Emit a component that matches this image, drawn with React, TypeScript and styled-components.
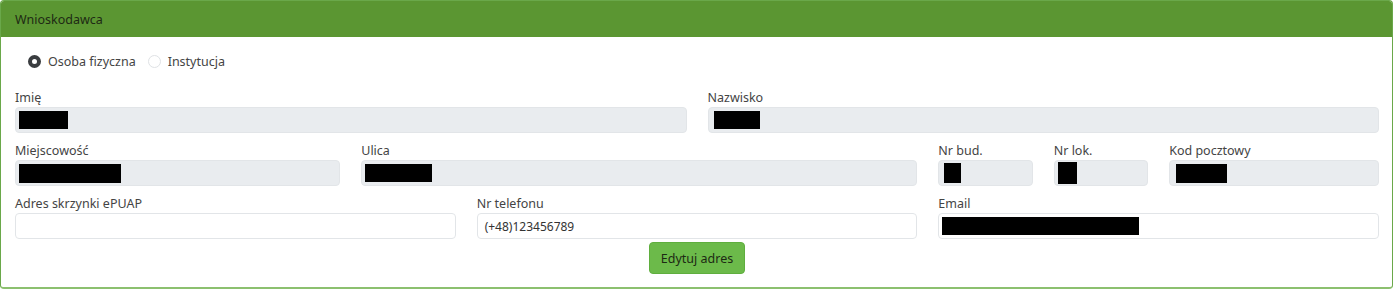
import styled, { createGlobalStyle } from "styled-components";

const GlobalStyle = createGlobalStyle`
  body {
    margin: 0;
    background: #ffffff;
    font-family: "Noto Sans", "Open Sans", sans-serif;
    color: #333333;
  }
  * {
    box-sizing: border-box;
  }
`;

const Card = styled.section`
  width: 1393px;
  height: 289px;
  border: 1px solid #6aa84a;
  border-bottom: 2px solid #8cc06f;
  border-radius: 4px;
  overflow: hidden;
  background: #ffffff;
`;

const CardHeader = styled.header`
  height: 36px;
  background: #5b9632;
  padding: 0 14px;
  display: flex;
  align-items: center;
  font-size: 12.5px;
  color: #1e2a14;
`;

const CardBody = styled.div`
  padding: 14px 13px 0 14px;
  display: flex;
  flex-direction: column;
`;

const RadioGroup = styled.div`
  display: flex;
  align-items: center;
  gap: 12px;
  padding-left: 13px;
  height: 20px;
  margin-bottom: 18px;
`;

const RadioOption = styled.label`
  display: flex;
  align-items: center;
  gap: 7px;
  font-size: 12.5px;
  color: #444444;
`;

const RadioDot = styled.span<{ $checked?: boolean }>`
  width: 13px;
  height: 13px;
  border-radius: 50%;
  border: ${({ $checked }) => ($checked ? "4px solid #3a3d40" : "1px solid #dfe2e5")};
  background: #ffffff;
`;

const Grid = styled.div`
  display: grid;
  grid-template-columns: repeat(12, 1fr);
  column-gap: 21px;
  row-gap: 9px;
`;

const Field = styled.div<{ $span: number }>`
  grid-column: span ${({ $span }) => $span};
  display: flex;
  flex-direction: column;
  gap: 1px;
`;

const Label = styled.span`
  font-size: 12.5px;
  line-height: 17px;
  color: #444444;
`;

const InputBox = styled.div<{ $disabled?: boolean }>`
  height: 26px;
  border: 1px solid #e2e5e8;
  border-radius: 4px;
  background: ${({ $disabled }) => ($disabled ? "#e9ecef" : "#ffffff")};
  padding: 0 7px 0 3px;
  display: flex;
  align-items: center;
  font-size: 12px;
  color: #333333;
`;

const Redacted = styled.span<{ $w: number; $h?: number; $x?: number }>`
  display: block;
  width: ${({ $w }) => $w}px;
  height: ${({ $h }) => $h ?? 18}px;
  margin-left: ${({ $x }) => $x ?? 0}px;
  background: #000000;
`;

const PhoneValue = styled.span`
  padding-left: 4px;
`;

const Actions = styled.div`
  display: flex;
  justify-content: center;
  padding-top: 3px;
`;

const Button = styled.button`
  height: 32px;
  padding: 0 11px;
  border: 1px solid #5fae3e;
  border-radius: 4px;
  background: #6cba4a;
  color: #1d2a14;
  font-family: inherit;
  font-size: 12.5px;
`;

const App = () => {
  return (
    <>
      <GlobalStyle />
      <Card>
        <CardHeader>Wnioskodawca</CardHeader>
        <CardBody>
          <RadioGroup>
            <RadioOption>
              <RadioDot $checked />
              Osoba fizyczna
            </RadioOption>
            <RadioOption>
              <RadioDot />
              Instytucja
            </RadioOption>
          </RadioGroup>
          <Grid>
            <Field $span={6}>
              <Label>Imię</Label>
              <InputBox $disabled>
                <Redacted $w={49} />
              </InputBox>
            </Field>
            <Field $span={6}>
              <Label>Nazwisko</Label>
              <InputBox $disabled>
                <Redacted $w={46} $x={2} />
              </InputBox>
            </Field>

            <Field $span={3}>
              <Label>Miejscowość</Label>
              <InputBox $disabled>
                <Redacted $w={102} $h={19} />
              </InputBox>
            </Field>
            <Field $span={5}>
              <Label>Ulica</Label>
              <InputBox $disabled>
                <Redacted $w={67} />
              </InputBox>
            </Field>
            <Field $span={1}>
              <Label>Nr bud.</Label>
              <InputBox $disabled>
                <Redacted $w={17} $h={20} $x={2} />
              </InputBox>
            </Field>
            <Field $span={1}>
              <Label>Nr lok.</Label>
              <InputBox $disabled>
                <Redacted $w={19} $h={22} />
              </InputBox>
            </Field>
            <Field $span={2}>
              <Label>Kod pocztowy</Label>
              <InputBox $disabled>
                <Redacted $w={51} $h={19} $x={3} />
              </InputBox>
            </Field>

            <Field $span={4}>
              <Label>Adres skrzynki ePUAP</Label>
              <InputBox />
            </Field>
            <Field $span={4}>
              <Label>Nr telefonu</Label>
              <InputBox>
                <PhoneValue>(+48)123456789</PhoneValue>
              </InputBox>
            </Field>
            <Field $span={4}>
              <Label>Email</Label>
              <InputBox>
                <Redacted $w={197} />
              </InputBox>
            </Field>
          </Grid>
          <Actions>
            <Button>Edytuj adres</Button>
          </Actions>
        </CardBody>
      </Card>
    </>
  );
};

export default App;
